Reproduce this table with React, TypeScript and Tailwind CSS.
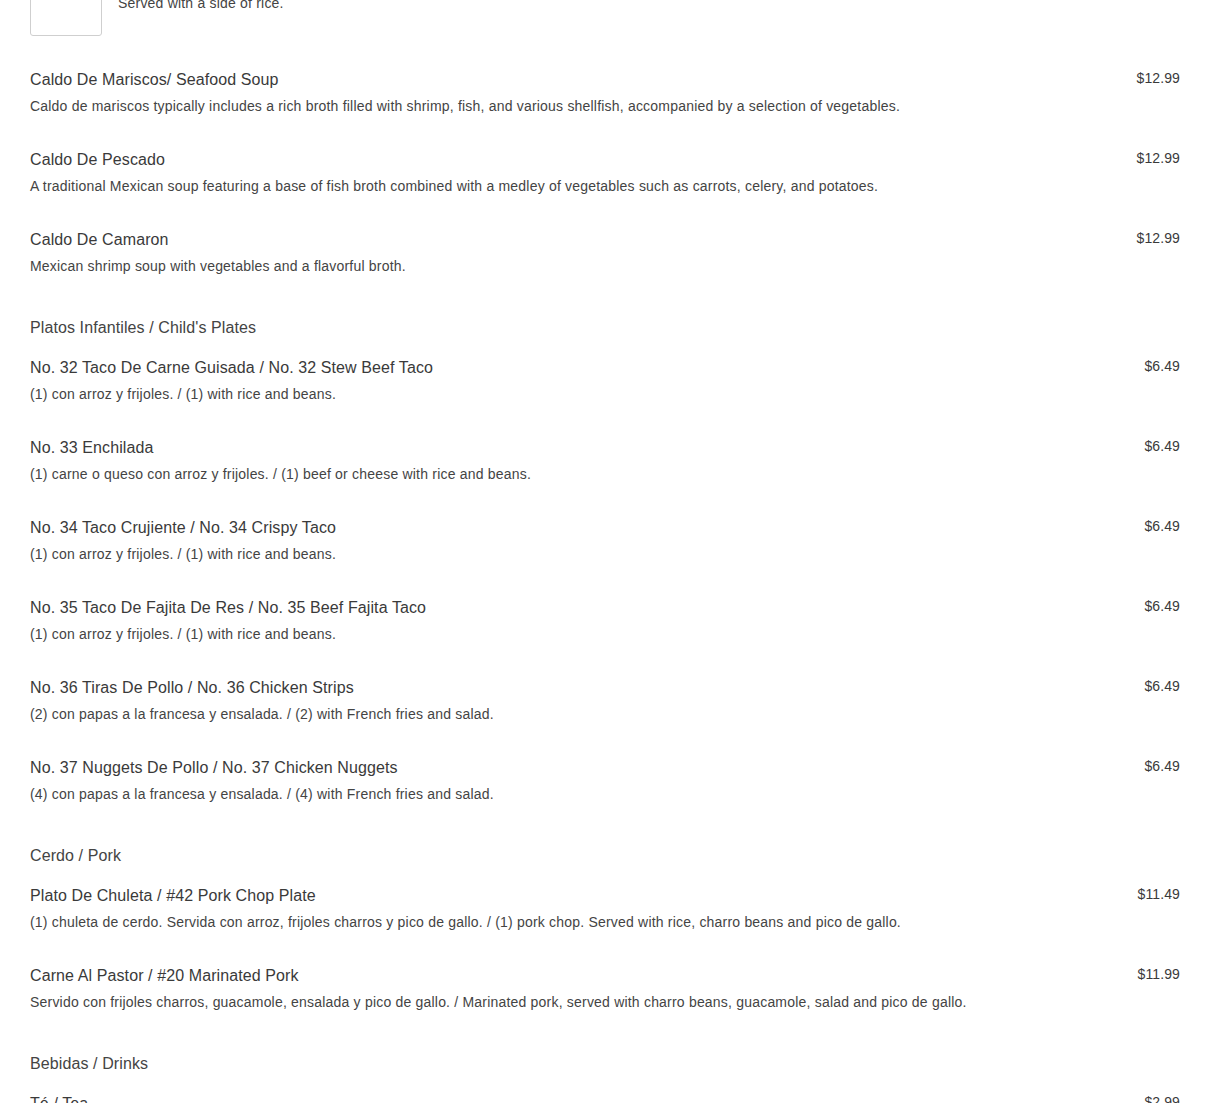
type MenuItem = {
  name: string;
  description: string;
  price: string;
};

type Section = {
  title: string;
  items: MenuItem[];
};

const soups: MenuItem[] = [
  {
    name: 'Caldo De Mariscos/ Seafood Soup',
    description:
      'Caldo de mariscos typically includes a rich broth filled with shrimp, fish, and various shellfish, accompanied by a selection of vegetables.',
    price: '$12.99',
  },
  {
    name: 'Caldo De Pescado',
    description:
      'A traditional Mexican soup featuring a base of fish broth combined with a medley of vegetables such as carrots, celery, and potatoes.',
    price: '$12.99',
  },
  {
    name: 'Caldo De Camaron',
    description: 'Mexican shrimp soup with vegetables and a flavorful broth.',
    price: '$12.99',
  },
];

const sections: Section[] = [
  {
    title: "Platos Infantiles / Child's Plates",
    items: [
      {
        name: 'No. 32 Taco De Carne Guisada / No. 32 Stew Beef Taco',
        description: '(1) con arroz y frijoles. / (1) with rice and beans.',
        price: '$6.49',
      },
      {
        name: 'No. 33 Enchilada',
        description: '(1) carne o queso con arroz y frijoles. / (1) beef or cheese with rice and beans.',
        price: '$6.49',
      },
      {
        name: 'No. 34 Taco Crujiente / No. 34 Crispy Taco',
        description: '(1) con arroz y frijoles. / (1) with rice and beans.',
        price: '$6.49',
      },
      {
        name: 'No. 35 Taco De Fajita De Res / No. 35 Beef Fajita Taco',
        description: '(1) con arroz y frijoles. / (1) with rice and beans.',
        price: '$6.49',
      },
      {
        name: 'No. 36 Tiras De Pollo / No. 36 Chicken Strips',
        description: '(2) con papas a la francesa y ensalada. / (2) with French fries and salad.',
        price: '$6.49',
      },
      {
        name: 'No. 37 Nuggets De Pollo / No. 37 Chicken Nuggets',
        description: '(4) con papas a la francesa y ensalada. / (4) with French fries and salad.',
        price: '$6.49',
      },
    ],
  },
  {
    title: 'Cerdo / Pork',
    items: [
      {
        name: 'Plato De Chuleta / #42 Pork Chop Plate',
        description:
          '(1) chuleta de cerdo. Servida con arroz, frijoles charros y pico de gallo. / (1) pork chop. Served with rice, charro beans and pico de gallo.',
        price: '$11.49',
      },
      {
        name: 'Carne Al Pastor / #20 Marinated Pork',
        description:
          'Servido con frijoles charros, guacamole, ensalada y pico de gallo. / Marinated pork, served with charro beans, guacamole, salad and pico de gallo.',
        price: '$11.99',
      },
    ],
  },
  {
    title: 'Bebidas / Drinks',
    items: [
      {
        name: 'Té / Tea',
        description: 'Iced tea, sweet or unsweetened.',
        price: '$2.99',
      },
    ],
  },
];

function ItemRow({ item }: { item: MenuItem }) {
  return (
    <div className="flex items-start justify-between gap-6 pb-[34px]">
      <div className="min-w-0">
        <div className="text-base leading-5 tracking-[0.1px] text-[#3a3a3a]">{item.name}</div>
        <div className="mt-[6px] text-sm leading-5 tracking-[0.2px] text-[#444]">{item.description}</div>
      </div>
      <div className="-mt-[2px] shrink-0 text-sm leading-5 tracking-[0.1px] text-[#3a3a3a]">{item.price}</div>
    </div>
  );
}

export default function App() {
  return (
    <div className="h-[1103px] overflow-hidden bg-white font-['Liberation_Sans',Arial,sans-serif]">
      <div className="-mt-[36px] px-[30px]">
        <div className="flex items-start gap-4 pb-[34px]">
          <div className="h-[72px] w-[72px] shrink-0 rounded-[3px] border border-[#cfcfcf] bg-white" />
          <div className="flex-1 pt-[3px]">
            <div className="text-base leading-5 tracking-[0.1px] text-[#3a3a3a]">Arroz Con Camaron</div>
            <div className="mt-[6px] text-sm leading-5 tracking-[0.2px] text-[#444]">
              Served with a side of rice.
            </div>
          </div>
        </div>

        {soups.map((item) => (
          <ItemRow key={item.name} item={item} />
        ))}

        {sections.map((section) => (
          <div key={section.title} className="mt-2">
            <h2 className="pb-5 text-base font-normal leading-5 tracking-[0.1px] text-[#444]">
              {section.title}
            </h2>
            {section.items.map((item) => (
              <ItemRow key={item.name} item={item} />
            ))}
          </div>
        ))}
      </div>
    </div>
  );
}
